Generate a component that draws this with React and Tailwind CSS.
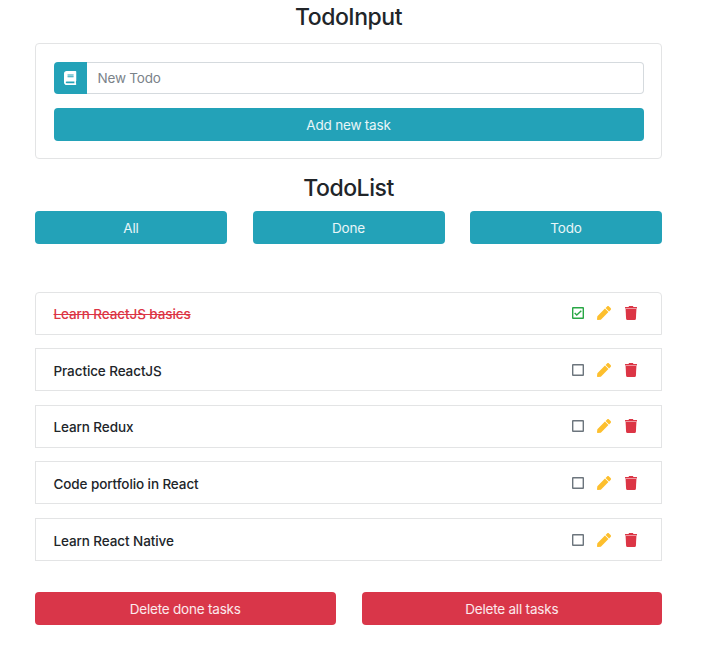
import React from "react";
import { FaBook, FaPen } from "react-icons/fa";

const tasks = [
  { title: "Learn ReactJS basics", done: true },
  { title: "Practice ReactJS" },
  { title: "Learn Redux" },
  { title: "Code portfolio in React" },
  { title: "Learn React Native" },
];

function Checkbox({ done }) {
  return (
    <svg
      viewBox="0 0 12 12"
      className={`h-3 w-3 ${done ? "text-[#28a745]" : "text-[#6c757d]"}`}
      fill="none"
      stroke="currentColor"
      strokeWidth="1.4"
    >
      <rect x="0.7" y="0.7" width="10.6" height="10.6" rx="0.3" />
      {done && <path d="M2.7 5.9 L4.8 8 L9.3 3.7" />}
    </svg>
  );
}

function Trash() {
  return (
    <svg viewBox="0 0 12 14" className="ml-[14px] h-[14px] w-3 text-[#dc3545]" fill="currentColor">
      <path d="M0.3 0.9 H3.5 L4.1 0.1 H7.9 L8.5 0.9 H11.7 Q12 0.9 12 1.2 V2.5 H0 V1.2 Q0 0.9 0.3 0.9 Z" />
      <path d="M0.6 3.1 H11.4 L10.9 12.8 Q10.8 14 9.6 14 H2.4 Q1.2 14 1.1 12.8 Z" />
    </svg>
  );
}

function Button({ children, className }) {
  return (
    <button
      className={`flex h-[33px] items-center justify-center rounded-[4px] pt-px text-[13.5px] tracking-[-0.2px] text-white/90 ${className}`}
    >
      {children}
    </button>
  );
}

function Task({ task, first }) {
  return (
    <li
      className={`flex h-[43px] items-center justify-between border border-[#e3e4e5] pr-[24px] pl-[17.5px] ${first ? "rounded-t-[4px]" : ""}`}
    >
      <span
        className={`pt-[2px] text-[13.5px] leading-5 font-medium tracking-[-0.1px] ${task.done ? "text-[#dc3545] line-through" : "text-[#212529]"}`}
      >
        {task.title}
      </span>
      <span className="flex items-center">
        <Checkbox done={task.done} />
        <FaPen className="ml-[13px] h-[14px] w-[14px] text-[#fdbf2d]" />
        <Trash />
      </span>
    </li>
  );
}

export default function App() {
  return (
    <div className="h-[667px] bg-white pr-[50px] pl-[35px] font-[Inter,'Liberation_Sans',sans-serif] text-[#212529]">
      <h1 className="h-[43px] pt-[2px] text-center text-[23px] leading-[30px] font-medium tracking-[-0.45px]">TodoInput</h1>
      <section className="h-[116px] rounded-[4px] border border-[#e3e4e5] px-[17.5px] pt-[18px]">
        <div className="flex h-[32px]">
          <span className="flex w-[33px] items-center justify-center rounded-l-[4px] bg-[#23a2b8] pl-px text-white">
            <FaBook className="h-[14px] w-[12.25px]" />
          </span>
          <input
            placeholder="New Todo"
            className="min-w-0 flex-1 rounded-r-[4px] border border-l-0 border-[#d5dade] px-[11px] pt-px text-[13.5px] tracking-[-0.2px] outline-none placeholder:text-[#7b838a]"
          />
        </div>
        <Button className="mt-[14px] w-full bg-[#23a2b8]">Add new task</Button>
      </section>
      <h1 className="h-[52px] pt-[14px] text-center text-[23px] leading-[30px] font-medium tracking-[-0.45px]">TodoList</h1>
      <div className="grid grid-cols-3 gap-[25.5px]">
        <Button className="bg-[#23a2b8]">All</Button>
        <Button className="bg-[#23a2b8]">Done</Button>
        <Button className="bg-[#23a2b8]">Todo</Button>
      </div>
      <ul className="mt-[47.5px] flex flex-col gap-[13.65px]">
        {tasks.map((task, i) => (
          <Task key={task.title} task={task} first={i === 0} />
        ))}
      </ul>
      <div className="mt-[31px] grid grid-cols-2 gap-[26px]">
        <Button className="bg-[#d93649]">Delete done tasks</Button>
        <Button className="bg-[#d93649]">Delete all tasks</Button>
      </div>
    </div>
  );
}
